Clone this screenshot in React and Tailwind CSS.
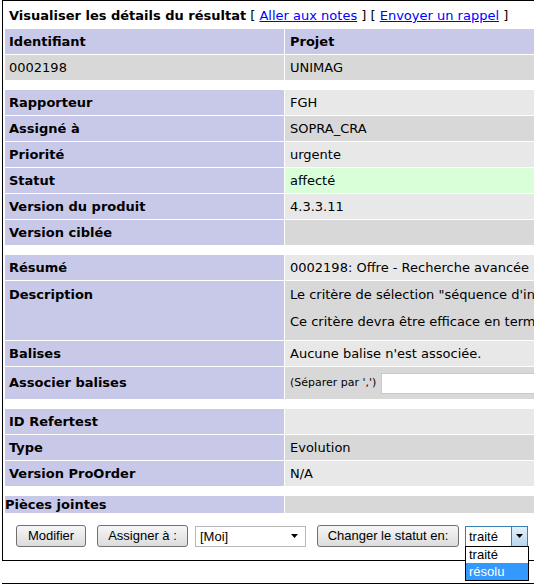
import React from 'react';

const Row = ({ label, value, bg, h = 'h-[25px]', top = false }) => (
  <div className={`flex gap-px ${h}`}>
    <div className={`w-[279px] shrink-0 bg-[#c8c8e8] font-bold px-[4px] flex ${top ? 'items-start pt-[7px] leading-[13.5px]' : 'items-center'}`}>
      {label}
    </div>
    <div className={`flex-1 ${bg} pl-[5px] flex whitespace-nowrap ${top ? 'items-start pt-[7px] leading-[13.5px]' : 'items-center'}`}>
      {value}
    </div>
  </div>
);

const Spacer = () => <div className="h-[8px] bg-white" />;

const Btn = ({ children, className }) => (
  <button className={`h-[22px] rounded-[3px] border border-[#707070] bg-gradient-to-b from-[#f6f6f6] to-[#dcdcdc] text-[13px] text-black font-['Liberation_Sans',Arial,sans-serif] ${className}`}>
    {children}
  </button>
);

export default function App() {
  return (
    <div className="w-[534px] h-[585px] overflow-hidden bg-white text-[13px] text-black font-['DejaVu_Sans',Verdana,sans-serif]">
      <div className="ml-[2px] w-[760px] border-l border-t border-b border-black pl-[2px]">
        {/* Title */}
        <div className="h-[28px] flex items-center pl-[4px] pt-[2px] whitespace-nowrap">
          <span className="font-bold">Visualiser les détails du résultat</span>
          <span className="ml-[4px]">[ <a href="#" className="text-[#0000ff] underline">Aller aux notes</a> ] [ <a href="#" className="text-[#0000ff] underline">Envoyer un rappel</a> ]</span>
        </div>

        <div className="flex flex-col gap-px">
          <div className="flex gap-px h-[25px]">
            <div className="w-[279px] shrink-0 bg-[#c8c8e8] font-bold px-[4px] flex items-center">Identifiant</div>
            <div className="flex-1 bg-[#c8c8e8] font-bold pl-[5px] flex items-center">Projet</div>
          </div>
          <div className="flex gap-px h-[25px]">
            <div className="w-[279px] shrink-0 bg-[#d8d8d8] px-[4px] flex items-center">0002198</div>
            <div className="flex-1 bg-[#d8d8d8] pl-[5px] flex items-center">UNIMAG</div>
          </div>
          <Spacer />
          <Row label="Rapporteur" value="FGH" bg="bg-[#e8e8e8]" />
          <Row label="Assigné à" value="SOPRA_CRA" bg="bg-[#d8d8d8]" />
          <Row label="Priorité" value="urgente" bg="bg-[#e8e8e8]" />
          <Row label="Statut" value="affecté" bg="bg-[#d8ffd8]" />
          <Row label="Version du produit" value="4.3.3.11" bg="bg-[#e8e8e8]" />
          <Row label="Version ciblée" value="" bg="bg-[#d8d8d8]" />
          <Spacer />
          <Row label="Résumé" value="0002198: Offre - Recherche avancée : ajout du critère séquence d'intervention" bg="bg-[#e8e8e8]" />
          <Row
            label="Description"
            top
            h="h-[59px]"
            bg="bg-[#d8d8d8]"
            value={
              <div>
                Le critère de sélection "séquence d'intervention" doit être ajouté à la recherche avancée.
                <br />
                <br />
                Ce critère devra être efficace en termes de performances.
              </div>
            }
          />
          <Row label="Balises" value="Aucune balise n'est associée." bg="bg-[#e8e8e8]" />
          <Row
            label="Associer balises"
            h="h-[32px]"
            bg="bg-[#d8d8d8]"
            value={
              <div className="flex items-center">
                <span className="text-[11px]">(Séparer par ',')</span>
                <input type="text" className="ml-[5px] w-[300px] h-[21px] bg-white border border-[#c8c8c8] outline-none" />
              </div>
            }
          />
          <Spacer />
          <Row label="ID Refertest" value="" bg="bg-[#e8e8e8]" />
          <Row label="Type" value="Evolution" bg="bg-[#d8d8d8]" />
          <Row label="Version ProOrder" value="N/A" bg="bg-[#e8e8e8]" />
          <Spacer />
          <div className="flex gap-px h-[17px]">
            <div className="w-[279px] shrink-0 bg-[#c8c8e8] font-bold flex items-center">Pièces jointes</div>
            <div className="flex-1 bg-[#d8d8d8]" />
          </div>
        </div>

        {/* Buttons */}
        <div className="h-[47px] flex items-start pt-[12px] font-['Liberation_Sans',Arial,sans-serif] text-[13px]">
          <Btn className="ml-[11px] w-[70px]">Modifier</Btn>
          <Btn className="ml-[11px] w-[91px]">Assigner à :</Btn>
          <div className="ml-[7px] w-[111px] h-[21px] mt-px border border-[#b8b8b8] bg-white flex items-center justify-between pl-[4px] pr-[6px]">
            <span>[Moi]</span>
            <svg width="8" height="5" viewBox="0 0 8 5"><path d="M0 0h7L3.5 4z" fill="#000" /></svg>
          </div>
          <Btn className="ml-[11px] w-[142px]">Changer le statut en:</Btn>
          <div className="relative ml-[6px] w-[63px] h-[21px] mt-px border border-[#3c7fb1] bg-white flex items-center">
            <span className="flex-1 pl-[3px]">traité</span>
            <div className="w-[16px] h-full border-l border-[#3c7fb1] bg-gradient-to-b from-[#e3f1fb] to-[#b6d6f0] flex items-center justify-center">
              <svg width="8" height="5" viewBox="0 0 8 5"><path d="M0 0h7L3.5 4z" fill="#000" /></svg>
            </div>
            <div className="absolute left-[-1px] top-[19px] w-[64px] border border-black bg-white z-10">
              <div className="h-[16px] leading-[16px] pl-[3px]">traité</div>
              <div className="h-[17px] leading-[17px] pl-[3px] bg-[#3399ff] text-white">résolu</div>
            </div>
          </div>
        </div>
      </div>
      <div className="mt-[22px] ml-[2px] border-t border-black" />
    </div>
  );
}
